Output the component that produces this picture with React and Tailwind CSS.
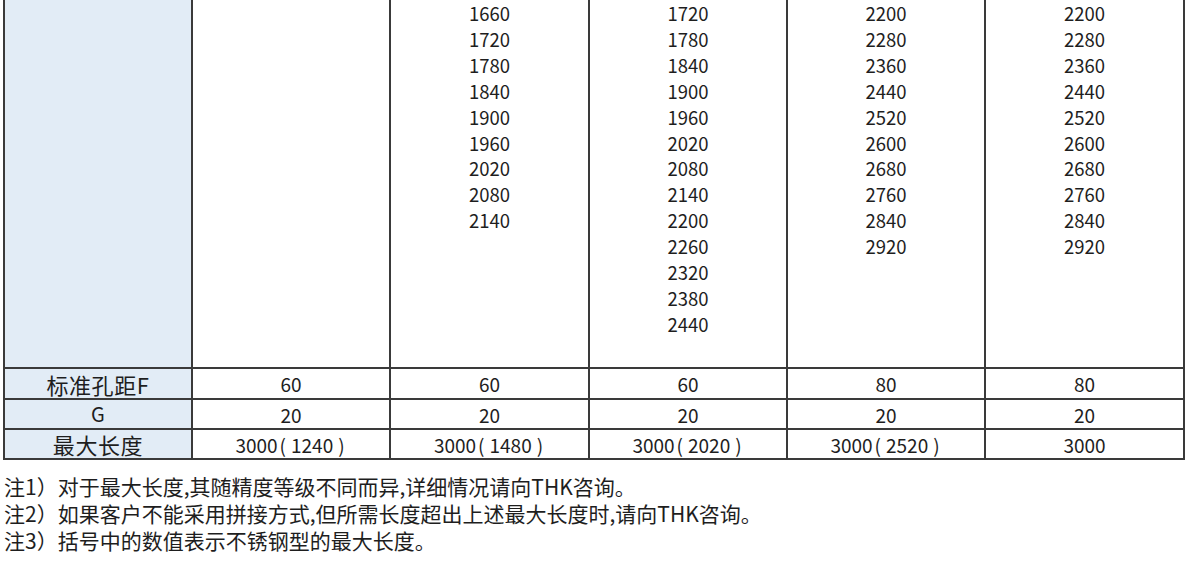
import React from "react";

const cols = [
  ["1660", "1720", "1780", "1840", "1900", "1960", "2020", "2080", "2140"],
  ["1720", "1780", "1840", "1900", "1960", "2020", "2080", "2140", "2200", "2260", "2320", "2380", "2440"],
  ["2200", "2280", "2360", "2440", "2520", "2600", "2680", "2760", "2840", "2920"],
  ["2200", "2280", "2360", "2440", "2520", "2600", "2680", "2760", "2840", "2920"],
];

const F = ["60", "60", "60", "80", "80"];
const G = ["20", "20", "20", "20", "20"];
const MAX = [
  ["3000", "1240"],
  ["3000", "1480"],
  ["3000", "2020"],
  ["3000", "2520"],
  ["3000", null],
];

const font = { fontFamily: '"Noto Sans CJK SC", "Noto Sans", sans-serif' };

export default function App() {
  return (
    <div className="w-[1190px] h-[567px] bg-white text-[#1e1e1e] overflow-hidden" style={font}>
      <div className="ml-[3px] w-[1182px] bg-[#3a3a3a] px-[2px] pb-[2px] grid grid-cols-[186px_196px_197px_196px_196px_197px] grid-rows-[367px_29px_28px_28px] gap-[2px]">
        {/* body row */}
        <div className="bg-[#e2ecf6]" />
        <div className="bg-white" />
        {cols.map((c, i) => (
          <div key={i} className="bg-white flex flex-col items-center pt-[1px] text-[18.5px] leading-[25.9px]">
            {c.map((v, j) => (
              <div key={j}>{v}</div>
            ))}
          </div>
        ))}
        {/* F row */}
        <div className="bg-[#e2ecf6] flex items-center justify-center text-[22px] tracking-[0.6px] leading-none">标准孔距F</div>
        {F.map((v, i) => (
          <div key={i} className="bg-white flex items-center justify-center text-[19px] leading-none">{v}</div>
        ))}
        {/* G row */}
        <div className="bg-[#e2ecf6] flex items-center justify-center text-[20px] leading-none">G</div>
        {G.map((v, i) => (
          <div key={i} className="bg-white flex items-center justify-center text-[19px] leading-none">{v}</div>
        ))}
        {/* max row */}
        <div className="bg-[#e2ecf6] flex items-center justify-center text-[22px] tracking-[0.6px] leading-none">最大长度</div>
        {MAX.map(([a, b], i) => (
          <div key={i} className="bg-white flex items-center justify-center text-[19px] leading-none">
            <span>{a}</span>
            {b && (
              <>
                <span className="pl-[2px] pr-[5px]">(</span>
                <span>{b}</span>
                <span className="pl-[5px] pr-[2px]">)</span>
              </>
            )}
          </div>
        ))}
      </div>
      <div className="mt-[13px] pl-[4px] text-[21px] leading-[27px]">
        <div>注1）对于最大长度,其随精度等级不同而异,详细情况请向THK咨询。</div>
        <div>注2）如果客户不能采用拼接方式,但所需长度超出上述最大长度时,请向THK咨询。</div>
        <div>注3）括号中的数值表示不锈钢型的最大长度。</div>
      </div>
    </div>
  );
}
